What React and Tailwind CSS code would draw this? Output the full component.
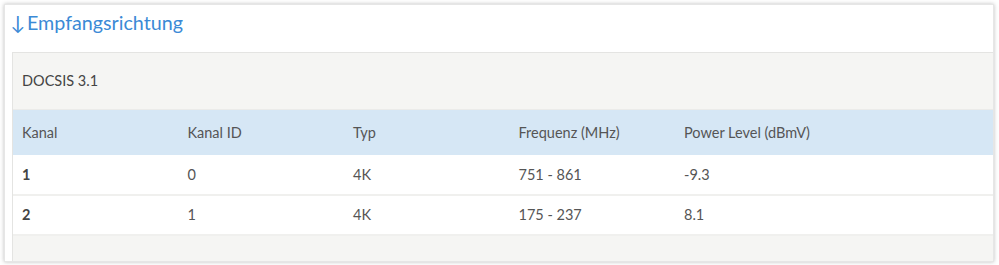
const HEADERS = ['Kanal', 'Kanal ID', 'Typ', 'Frequenz (MHz)', 'Power Level (dBmV)']

const ROWS = [
  ['1', '0', '4K', '751 - 861', '-9.3'],
  ['2', '1', '4K', '175 - 237', '8.1'],
]

export default function App() {
  return (
    <div className="w-[999px] h-[265px] bg-white pt-[4px] pl-[4px] overflow-hidden" style={{ fontFamily: 'Lato, "Noto Sans", sans-serif' }}>
      <div className="w-[990px] h-[258px] bg-white border border-[#e6e6e6] shadow-[0_0_4px_rgba(0,0,0,0.25)] pl-[7px] overflow-hidden flex flex-col">
        {/* Title */}
        <h2 className="h-[47px] flex items-center text-[19.7px] text-[#3b8ad6] pb-[12px]">
          <span className="w-[10px] flex justify-center ml-[1px] mr-[4px]">↓</span>Empfangsrichtung
        </h2>

        <div className="flex-1 border-t border-l border-[#e4e4e2] bg-[#f5f5f3] overflow-hidden">
          {/* Box header */}
          <div className="h-[57px] flex items-center pl-[9px] text-[14.5px] text-[#444] border-b border-[#ebebe9]">
            DOCSIS 3.1
          </div>

          <table className="w-[993px] table-fixed text-[14.5px] text-[#555] border-collapse">
            <thead>
              <tr className="bg-[#d6e7f5] h-[45px]">
                {HEADERS.map(h => (
                  <th key={h} className="w-[165.5px] pl-[9px] text-left font-normal">{h}</th>
                ))}
                <th className="w-[165.5px]" />
              </tr>
            </thead>
            <tbody>
              {ROWS.map(r => (
                <tr key={r[0]} className="bg-white h-[40px] border-b-[2px] border-[#f0f0ee]">
                  {r.map((c, i) => (
                    <td key={i} className={i === 0 ? 'pl-[9px] font-bold text-[#444]' : 'pl-[9px]'}>{c}</td>
                  ))}
                  <td />
                </tr>
              ))}
            </tbody>
          </table>
        </div>
      </div>
    </div>
  )
}
